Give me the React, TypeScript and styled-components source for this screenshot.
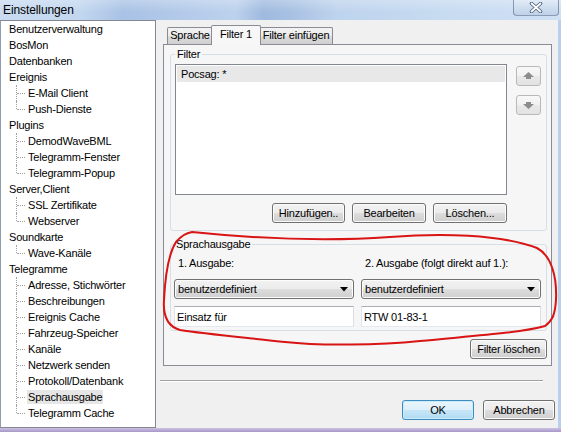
import React from 'react';
import styled, { createGlobalStyle } from 'styled-components';

type TreeNode = {
  label: string;
  children?: string[];
};

const tree: TreeNode[] = [
  { label: 'Benutzerverwaltung' },
  { label: 'BosMon' },
  { label: 'Datenbanken' },
  { label: 'Ereignis', children: ['E-Mail Client', 'Push-Dienste'] },
  { label: 'Plugins', children: ['DemodWaveBML', 'Telegramm-Fenster', 'Telegramm-Popup'] },
  { label: 'Server,Client', children: ['SSL Zertifikate', 'Webserver'] },
  { label: 'Soundkarte', children: ['Wave-Kanäle'] },
  {
    label: 'Telegramme',
    children: [
      'Adresse, Stichwörter',
      'Beschreibungen',
      'Ereignis Cache',
      'Fahrzeug-Speicher',
      'Kanäle',
      'Netzwerk senden',
      'Protokoll/Datenbank',
      'Sprachausgabe',
      'Telegramm Cache',
    ],
  },
];

const SELECTED_NODE = 'Sprachausgabe';

const GlobalStyle = createGlobalStyle`
  html, body {
    margin: 0;
    padding: 0;
    background: #fff;
  }
  body {
    font-family: "Liberation Sans", Arial, sans-serif;
    font-size: 11px;
    letter-spacing: -0.2px;
    color: #000;
  }
  * {
    box-sizing: border-box;
  }
`;

const Window = styled.div`
  position: relative;
  width: 561px;
  height: 432px;
  display: flex;
  flex-direction: column;
  overflow: hidden;
`;

const TitleBar = styled.div`
  height: 20px;
  display: flex;
  justify-content: space-between;
  padding-left: 3px;
  background:
    linear-gradient(180deg, rgba(255, 255, 255, 0.25), rgba(255, 255, 255, 0) 60%),
    linear-gradient(
      90deg,
      #c8dbf1 0%,
      #c3d7ef 14%,
      #a9c2e5 22%,
      #b4cbea 34%,
      #bcd1ec 42%,
      #9fbadf 47%,
      #a8c1e3 52%,
      #bed3ed 60%,
      #c7dbf1 80%,
      #cfe0f3 100%
    );
`;

const Title = styled.span`
  font-size: 12px;
  letter-spacing: -0.1px;
  line-height: 20px;
`;

const CloseButton = styled.div`
  width: 46px;
  height: 16px;
  margin-right: 2px;
  display: flex;
  align-items: center;
  justify-content: center;
  border: 1px solid rgba(70, 90, 120, 0.55);
  border-top: none;
  border-radius: 0 0 4px 4px;
  background: linear-gradient(180deg, #e3ecf7 0%, #cfdeef 50%, #bfd2ea 100%);
`;

const Body = styled.div`
  height: 408px;
  display: flex;
  background: #f0f0f0;
  border-right: 3px solid #b8d0ec;
`;

const BottomFrame = styled.div`
  height: 4px;
  background: linear-gradient(180deg, #cdc1e2, #a597c8);
`;

const TreePanel = styled.div`
  width: 156px;
  background: #fff;
  border: 1px solid #828790;
  border-left-color: #8e9bb0;
`;

const TreeRow = styled.div<{ $child?: boolean; $last?: boolean }>`
  position: relative;
  height: 16px;
  line-height: 16px;
  padding-left: ${(p) => (p.$child ? 26 : 7)}px;
  white-space: nowrap;

  ${(p) =>
    p.$child &&
    `
    &::before {
      content: '';
      position: absolute;
      left: 15px;
      top: 0;
      height: ${p.$last ? 8 : 16}px;
      border-left: 1px dotted #a0a0a0;
    }
    &::after {
      content: '';
      position: absolute;
      left: 16px;
      top: 8px;
      width: 8px;
      border-top: 1px dotted #a0a0a0;
    }
  `}
`;

const TreeLabel = styled.span<{ $selected?: boolean }>`
  padding: 1px 1px;
  background: ${(p) => (p.$selected ? '#e6e6e6' : 'transparent')};
`;

const RightPanel = styled.div`
  flex: 1;
  display: flex;
  flex-direction: column;
`;

const TabStrip = styled.div`
  position: relative;
  z-index: 1;
  height: 25px;
  margin-left: 11px;
  display: flex;
  align-items: flex-end;
`;

const Tab = styled.div<{ $active?: boolean; $width: number }>`
  position: relative;
  width: ${(p) => p.$width}px;
  height: ${(p) => (p.$active ? 20 : 17)}px;
  margin: ${(p) => (p.$active ? '0 -2px' : '0 0 1px 0')};
  z-index: ${(p) => (p.$active ? 2 : 1)};
  border: 1px solid #898c95;
  border-bottom: none;
  border-radius: 2px 2px 0 0;
  text-align: center;
  line-height: ${(p) => (p.$active ? 16 : 15)}px;
  background: ${(p) =>
    p.$active
      ? '#f7f7f7'
      : 'linear-gradient(180deg, #f2f2f2 0%, #ebebeb 50%, #dddddd 51%, #cfcfcf 100%)'};
`;

const TabPanel = styled.div`
  width: 389px;
  height: 322px;
  margin-left: 7px;
  margin-top: -1px;
  padding: 2px 4px 0 6px;
  border: 1px solid #898c95;
  background: #f6f6f6;
  display: flex;
  flex-direction: column;
`;

const Group = styled.fieldset<{ $pad: string }>`
  margin: 0;
  min-width: 0;
  padding: ${(p) => p.$pad};
  border: 1px solid #d5dfe5;
  border-radius: 3px;
`;

const Legend = styled.legend`
  padding: 0 2px;
  margin-left: 0;
  line-height: 14px;
`;

const FilterGrid = styled.div`
  display: grid;
  grid-template-columns: 332px 25px;
  column-gap: 9px;
  row-gap: 8px;
`;

const ListBox = styled.div`
  height: 131px;
  padding: 1px;
  border: 1px solid #828790;
  background: #fff;
`;

const ListItem = styled.div<{ $selected?: boolean }>`
  height: 16px;
  line-height: 16px;
  padding-left: 4px;
  background: ${(p) => (p.$selected ? '#e8e8e8' : 'transparent')};
`;

const ArrowColumn = styled.div`
  display: flex;
  flex-direction: column;
  gap: 9px;
  padding-top: 2px;
`;

const ArrowButton = styled.div`
  width: 25px;
  height: 20px;
  display: flex;
  align-items: center;
  justify-content: center;
  border: 1px solid #b9b9b9;
  border-radius: 3px;
  background: linear-gradient(180deg, #f8f8f8 0%, #f1f1f1 50%, #e9e9e9 51%, #e2e2e2 100%);
`;

const ButtonRow = styled.div<{ $gap: number }>`
  display: flex;
  justify-content: flex-end;
  gap: ${(p) => p.$gap}px;
`;

const Button = styled.div<{ $width: number; $default?: boolean }>`
  width: ${(p) => p.$width}px;
  height: 20px;
  line-height: 18px;
  text-align: center;
  border: 1px solid ${(p) => (p.$default ? '#3c8cbe' : '#707070')};
  border-radius: 3px;
  background: ${(p) =>
    p.$default
      ? 'linear-gradient(180deg, #e9f5fc 0%, #dcf0fb 50%, #c6e6f8 51%, #b3dbf3 100%)'
      : 'linear-gradient(180deg, #f2f2f2 0%, #ebebeb 50%, #dddddd 51%, #cfcfcf 100%)'};
  box-shadow: ${(p) => (p.$default ? 'inset 0 0 0 1px #c8ecfd' : 'inset 0 0 0 1px #fcfcfc')};
`;

const OutputGrid = styled.div`
  display: grid;
  grid-template-columns: 180px 180px;
  column-gap: 7px;
`;

const OutputColumn = styled.div`
  display: flex;
  flex-direction: column;
`;

const OutputLabel = styled.div`
  height: 14px;
  line-height: 14px;
  padding-left: 4px;
  white-space: nowrap;
`;

const Combo = styled.div`
  height: 20px;
  margin-top: 9px;
  padding: 0 5px 0 3px;
  display: flex;
  align-items: center;
  justify-content: space-between;
  border: 1px solid #707070;
  border-radius: 3px;
  background: linear-gradient(180deg, #f2f2f2 0%, #ebebeb 50%, #dddddd 51%, #cfcfcf 100%);
  box-shadow: inset 0 0 0 1px #fcfcfc;
`;

const TextField = styled.input`
  height: 21px;
  margin-top: 7px;
  padding: 0 2px;
  border: 1px solid;
  border-color: #abadb3 #dbdfe6 #e3e9ef #e2e3ea;
  background: #fff;
  font: inherit;
  letter-spacing: inherit;
  color: #000;
  outline: none;
`;

const ClearRow = styled(ButtonRow)`
  margin-top: 8px;
`;

const Separator = styled.div`
  width: 383px;
  height: 2px;
  margin: 14px 0 0 4px;
  border-top: 1px solid #a0a0a0;
  border-bottom: 1px solid #fff;
`;

const Footer = styled(ButtonRow)`
  margin-top: 18px;
  padding-right: 3px;
`;

const Scribble = styled.svg`
  position: absolute;
  left: 0;
  top: 0;
  pointer-events: none;
`;

const ArrowIcon = ({ down }: { down?: boolean }) => (
  <svg width="11" height="8" viewBox="0 0 11 8" style={down ? { transform: 'rotate(180deg)' } : undefined}>
    <polygon points="5.5,0 11,5 8,5 8,7 3,7 3,5 0,5" fill="#8c8c8c" />
  </svg>
);

const DropArrow = () => (
  <svg width="8" height="5" viewBox="0 0 8 5">
    <polygon points="0,0 8,0 4,4.5" fill="#000" />
  </svg>
);

const CloseGlyph = () => (
  <svg width="14" height="11" viewBox="0 0 14 11">
    <path d="M2.5 1.5 L11.5 9.5 M11.5 1.5 L2.5 9.5" stroke="#50627e" strokeWidth="3.6" strokeLinecap="round" />
    <path d="M2.5 1.5 L11.5 9.5 M11.5 1.5 L2.5 9.5" stroke="#fff" strokeWidth="1.8" strokeLinecap="round" />
  </svg>
);

const outputs = [
  { label: '1. Ausgabe:', mode: 'benutzerdefiniert', text: 'Einsatz für' },
  { label: '2. Ausgabe (folgt direkt auf 1.):', mode: 'benutzerdefiniert', text: 'RTW 01-83-1' },
];

export default function App() {
  return (
    <Window>
      <GlobalStyle />
      <TitleBar>
        <Title>Einstellungen</Title>
        <CloseButton>
          <CloseGlyph />
        </CloseButton>
      </TitleBar>

      <Body>
        <TreePanel>
          {tree.map((node) => (
            <React.Fragment key={node.label}>
              <TreeRow>
                <TreeLabel>{node.label}</TreeLabel>
              </TreeRow>
              {node.children?.map((child, i) => (
                <TreeRow key={child} $child $last={i === node.children!.length - 1}>
                  <TreeLabel $selected={child === SELECTED_NODE}>{child}</TreeLabel>
                </TreeRow>
              ))}
            </React.Fragment>
          ))}
        </TreePanel>

        <RightPanel>
          <TabStrip>
            <Tab $width={46}>Sprache</Tab>
            <Tab $width={50} $active>
              Filter 1
            </Tab>
            <Tab $width={74}>Filter einfügen</Tab>
          </TabStrip>

          <TabPanel>
            <Group $pad="3px 5px 7px 4px">
              <Legend>Filter</Legend>
              <FilterGrid>
                <ListBox>
                  <ListItem $selected>Pocsag: *</ListItem>
                </ListBox>
                <ArrowColumn>
                  <ArrowButton>
                    <ArrowIcon />
                  </ArrowButton>
                  <ArrowButton>
                    <ArrowIcon down />
                  </ArrowButton>
                </ArrowColumn>
                <ButtonRow $gap={7}>
                  <Button $width={73}>Hinzufügen..</Button>
                  <Button $width={74}>Bearbeiten</Button>
                  <Button $width={74}>Löschen...</Button>
                </ButtonRow>
              </FilterGrid>
            </Group>

            <Group $pad="5px 5px 3px 3px" style={{ marginTop: 6 }}>
              <Legend>Sprachausgabe</Legend>
              <OutputGrid>
                {outputs.map((o) => (
                  <OutputColumn key={o.label}>
                    <OutputLabel>{o.label}</OutputLabel>
                    <Combo>
                      <span>{o.mode}</span>
                      <DropArrow />
                    </Combo>
                    <TextField readOnly value={o.text} />
                  </OutputColumn>
                ))}
              </OutputGrid>
            </Group>

            <ClearRow $gap={0}>
              <Button $width={77}>Filter löschen</Button>
            </ClearRow>
          </TabPanel>

          <Separator />

          <Footer $gap={9}>
            <Button $width={72} $default>
              OK
            </Button>
            <Button $width={72}>Abbrechen</Button>
          </Footer>
        </RightPanel>
      </Body>

      <BottomFrame />

      <Scribble width="561" height="432" viewBox="0 0 561 432">
        <path
          d="M192 232 C 250 238, 320 242, 390 237 C 440 233, 500 234, 537 248 C 552 256, 557 278, 556 300 C 555 314, 553 320, 545 326 C 520 333, 470 336, 420 341 C 380 345, 320 346, 285 342 C 250 338, 205 334, 180 330 C 166 326, 163 314, 164 300 C 165 280, 167 256, 176 242 C 181 236, 186 233, 192 232 Z"
          fill="none"
          stroke="#d81414"
          strokeWidth="2"
        />
      </Scribble>
    </Window>
  );
}
